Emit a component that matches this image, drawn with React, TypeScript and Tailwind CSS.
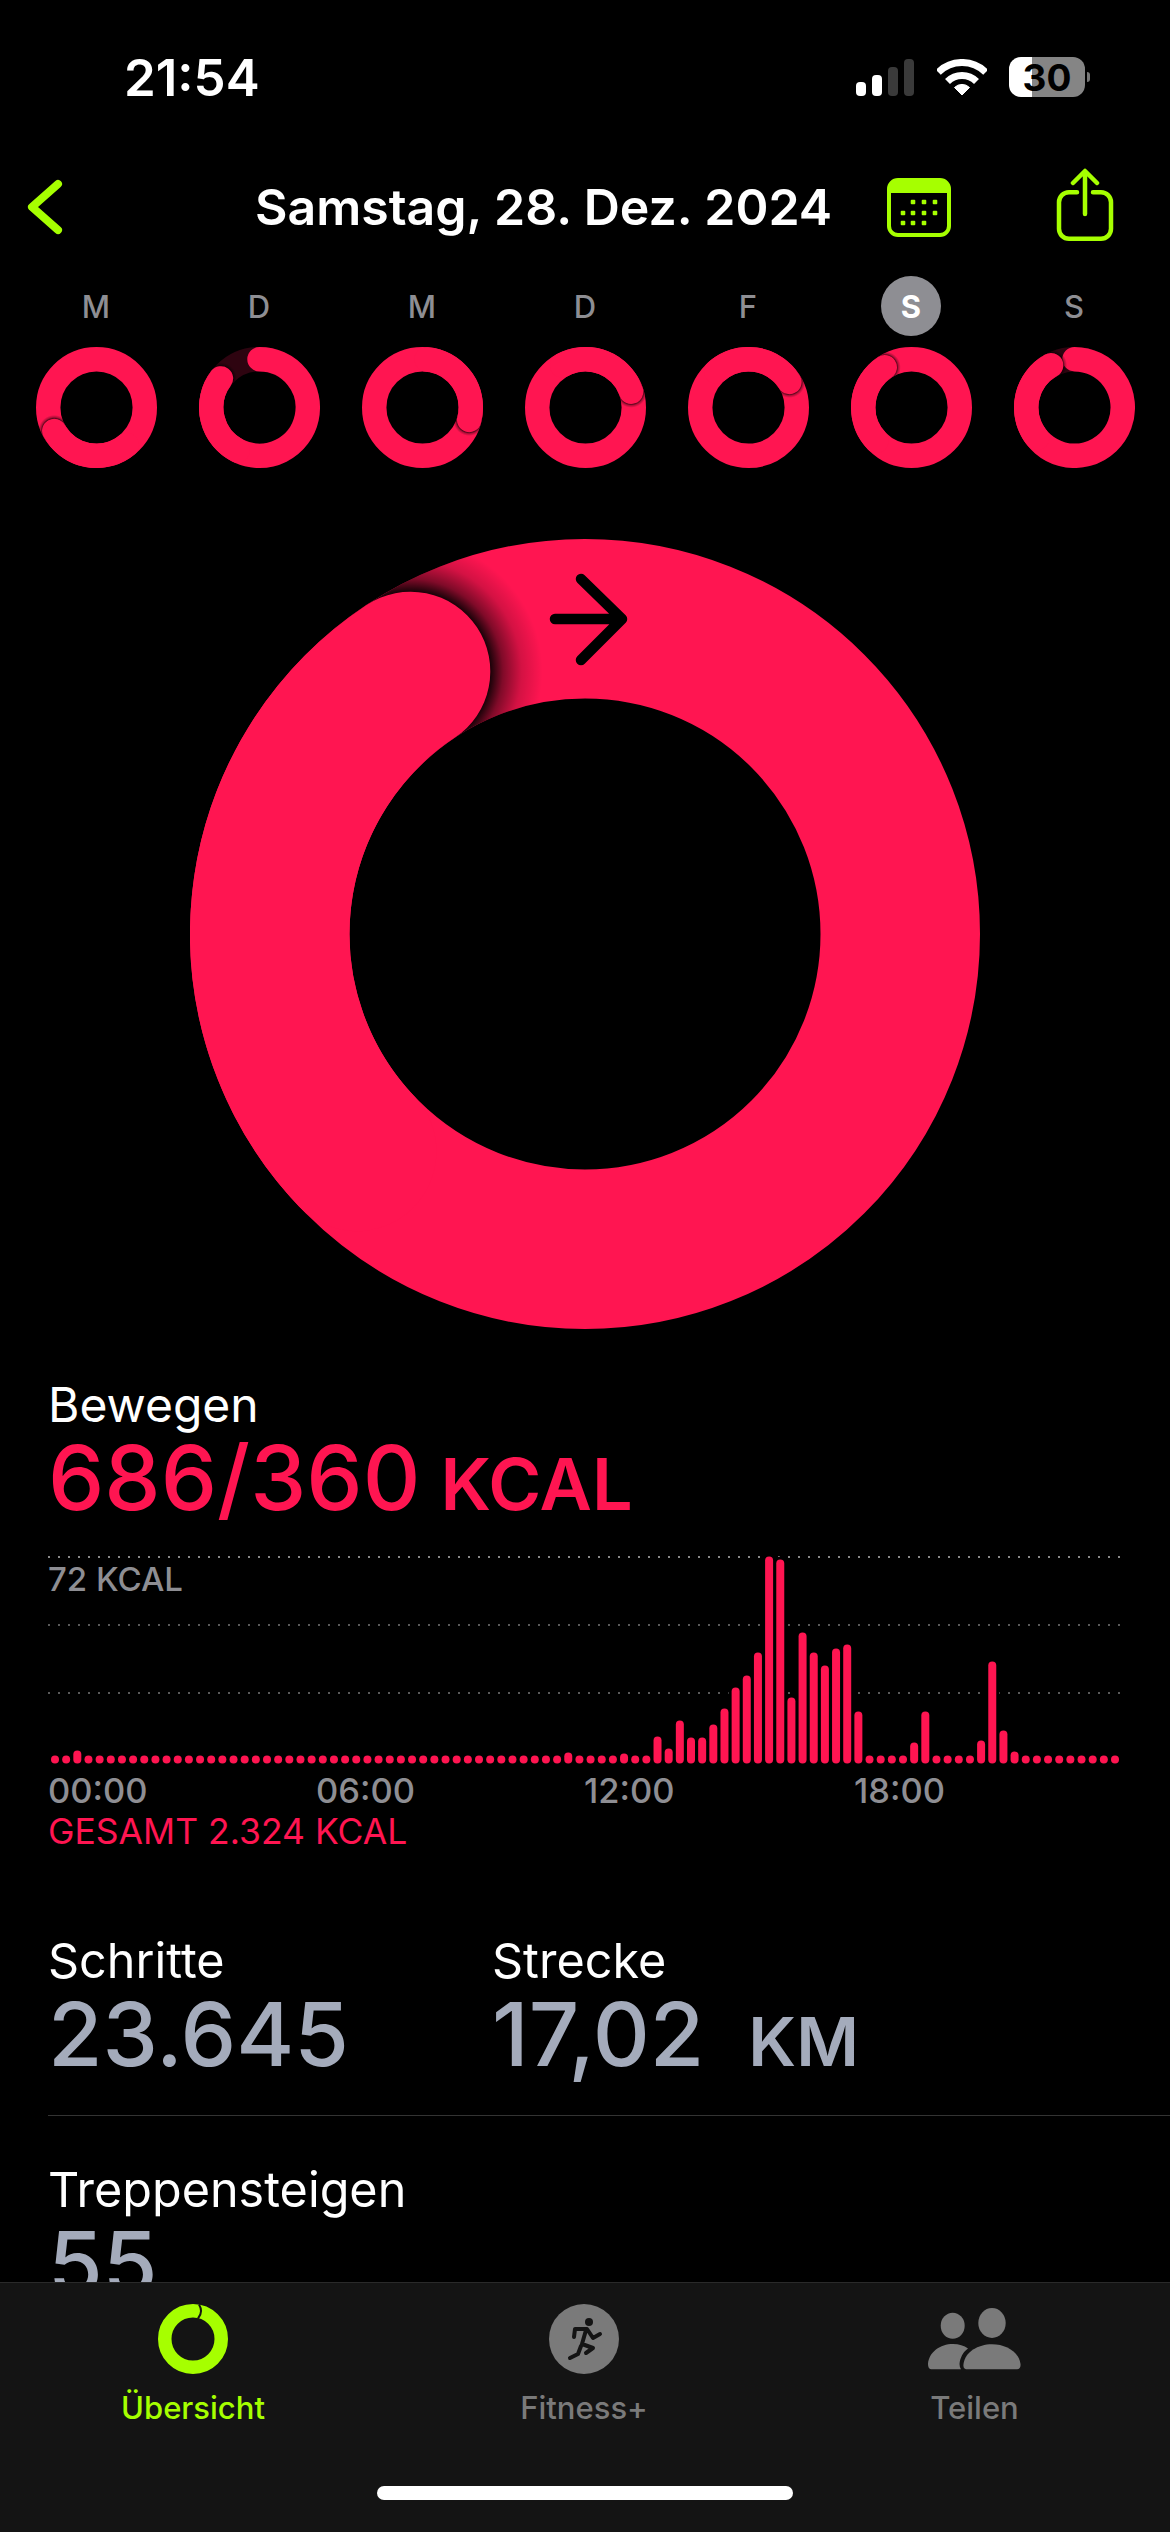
const PINK = '#ff1551';

// end angle of the move ring, in degrees clockwise from the top
const week = [
  { label: 'M', end: 241, full: true },
  { label: 'D', end: 307, full: false },
  { label: 'M', end: 105, full: true },
  { label: 'D', end: 71, full: true },
  { label: 'F', end: 58, full: true },
  { label: 'S', end: 326.4, full: true, selected: true },
  { label: 'S', end: 331, full: false },
];

// height in px per quarter hour, 8 is the flat dot
const barHeights: Record<number, number> = {
  2: 13, 46: 11, 51: 10, 54: 27, 55: 15, 56: 43, 57: 26, 58: 26, 59: 39, 60: 55, 61: 76, 62: 88, 63: 111,
  64: 207, 65: 204, 66: 66, 67: 131, 68: 111, 69: 98, 70: 115, 71: 119, 72: 52, 77: 21, 78: 52, 83: 23,
  84: 102, 85: 33, 86: 12,
};

const polar = (deg: number) => {
  const rad = (deg * Math.PI) / 180;
  return { x: 395 + 315.25 * Math.sin(rad), y: 395 - 315.25 * Math.cos(rad) };
};

const arc = (from: number, to: number) => {
  const a = polar(from);
  const b = polar(to);
  const large = to - from > 180 ? 1 : 0;
  return `M${a.x} ${a.y} A315.25 315.25 0 ${large} 1 ${b.x} ${b.y}`;
};

type RingProps = { id: string; end: number; full: boolean; arrow?: boolean; className: string };

const Ring = ({ id, end, full, arrow, className }: RingProps) => {
  const cap = polar(end);
  return (
    <svg viewBox="0 0 790 790" className={className}>
      <defs>
        {arrow ? (
          <radialGradient id={id} gradientUnits="userSpaceOnUse" cx={cap.x} cy={cap.y} r="132">
            <stop offset="0.6" stopColor="#000" stopOpacity="0.92" />
            <stop offset="0.7" stopColor="#000" stopOpacity="0.5" />
            <stop offset="0.84" stopColor="#000" stopOpacity="0.17" />
            <stop offset="1" stopColor="#000" stopOpacity="0" />
          </radialGradient>
        ) : (
          <radialGradient id={id} gradientUnits="userSpaceOnUse" cx={cap.x} cy={cap.y} r="104">
            <stop offset="0.76" stopColor="#000" stopOpacity="0.75" />
            <stop offset="0.86" stopColor="#000" stopOpacity="0.3" />
            <stop offset="1" stopColor="#000" stopOpacity="0" />
          </radialGradient>
        )}
      </defs>
      <circle cx="395" cy="395" r="315.25" fill="none" strokeWidth="159.5" stroke={full ? PINK : '#2e0410'} />
      {!full && <path d={arc(0, end)} fill="none" stroke={PINK} strokeWidth="159.5" strokeLinecap="round" />}
      <circle cx="395" cy="395" r="315.25" fill="none" strokeWidth="159.5" stroke={`url(#${id})`} />
      <path d={arc(end - 100, end)} fill="none" stroke={PINK} strokeWidth="159.5" strokeLinecap="round" />
      {arrow && (
        <path
          d="M365 80H432M391 40L432 80L391 121"
          fill="none"
          stroke="#000"
          strokeWidth="10.5"
          strokeLinecap="round"
          strokeLinejoin="round"
        />
      )}
    </svg>
  );
};

const StatusBar = () => (
  <div className="flex h-[154px] shrink-0 items-center pl-[124px] pr-[80px]">
    <span className="text-[51px] font-semibold leading-none text-white">21:54</span>
    <div className="ml-auto flex items-center">
      <svg width="58" height="37" viewBox="0 0 58 37">
        <rect x="0" y="23" width="10" height="14" rx="4" fill="#fff" />
        <rect x="16" y="16" width="10" height="21" rx="4" fill="#fff" />
        <rect x="32" y="8" width="10" height="29" rx="4" fill="#3a3a3a" />
        <rect x="48" y="0" width="10" height="37" rx="4" fill="#3a3a3a" />
      </svg>
      <svg width="50" height="37" viewBox="0 0 50 37" className="ml-[23px]">
        <path d="M1.3 13.3A33.5 33.5 0 0 1 48.7 13.3" fill="none" stroke="#fff" strokeWidth="7" />
        <path d="M10.5 22.5A20.5 20.5 0 0 1 39.5 22.5" fill="none" stroke="#fff" strokeWidth="7" />
        <path d="M25 36L17.5 28.5A10.6 10.6 0 0 1 32.5 28.5Z" fill="#fff" stroke="#fff" strokeWidth="1" strokeLinejoin="round" />
      </svg>
      <div className="ml-[22px] flex h-[40px] w-[76px] items-center justify-center rounded-[12px] bg-[linear-gradient(90deg,#ffffff_23px,#858585_23px)] text-[37px] font-bold leading-none text-black">
        30
      </div>
      <div className="ml-[2px] h-[10px] w-[3px] rounded-r-full bg-[#777777]" />
    </div>
  </div>
);

const NavBar = () => (
  <div className="mb-[16px] flex h-[106px] shrink-0 items-center">
    <div className="w-[255px] pl-[25px]">
      <svg width="40" height="64" viewBox="0 0 40 64">
        <path d="M33 9L7 32L33 55" fill="none" stroke="#a6ff00" strokeWidth="8" strokeLinecap="round" strokeLinejoin="round" />
      </svg>
    </div>
    <div className="w-[571px] whitespace-nowrap text-center text-[50px] font-semibold leading-none text-white">
      Samstag, 28. Dez. 2024
    </div>
    <svg width="64" height="59" viewBox="0 0 64 59" className="ml-[61px]">
      <rect x="2" y="2" width="60" height="55" rx="9" fill="none" stroke="#a6ff00" strokeWidth="4" />
      <path d="M2 15V11a9 9 0 0 1 9-9H53a9 9 0 0 1 9 9V15Z" fill="#a6ff00" />
      {[
        [26, 24], [37, 24], [48, 24],
        [16, 35], [26, 35], [37, 35], [48, 35],
        [16, 45], [26, 45], [37, 45],
      ].map(([x, y]) => (
        <rect key={`${x}-${y}`} x={x - 2.3} y={y - 2.3} width="4.6" height="4.6" rx="1" fill="#a6ff00" />
      ))}
    </svg>
    <svg width="60" height="75" viewBox="0 0 60 75" className="ml-[104px] mb-[3px]">
      <path
        d="M22 24.2H14a10 10 0 0 0 -10 10V60.8a10 10 0 0 0 10 10H46a10 10 0 0 0 10-10V34.2a10 10 0 0 0 -10-10H38"
        fill="none"
        stroke="#a6ff00"
        strokeWidth="4.5"
        strokeLinecap="round"
      />
      <path d="M30 46V4M18 15L30 3L42 15" fill="none" stroke="#a6ff00" strokeWidth="4.5" strokeLinecap="round" strokeLinejoin="round" />
    </svg>
  </div>
);

const WeekRow = () => (
  <div className="grid shrink-0 grid-cols-7 pl-[14.5px] pr-[14.5px]">
    {week.map((day, i) => (
      <div key={i} className="flex flex-col items-center">
        <div
          className={`flex h-[60px] w-[60px] items-center justify-center rounded-full text-[31px] leading-none ${
            day.selected ? 'bg-[#8e8e93] font-bold text-white' : 'font-medium text-[#8e8e93]'
          }`}
        >
          {day.label}
        </div>
        <Ring id={`day-${i}`} end={day.end} full={day.full} className="mt-[11px] h-[121px] w-[121px]" />
      </div>
    ))}
  </div>
);

const MoveChart = () => {
  const bars = Array.from({ length: 96 }, (_, i) => ({
    x: 51 + (1060 / 95) * i,
    h: barHeights[i] ?? 8,
  }));
  return (
    <div className="relative h-[220px] shrink-0">
      <svg width="1170" height="220" viewBox="0 0 1170 220">
        <line x1="48" x2="1120" y1="7" y2="7" stroke="#8a8a8a" strokeWidth="2" strokeDasharray="2 8" />
        <line x1="48" x2="1120" y1="75" y2="75" stroke="#5a5a5a" strokeWidth="2" strokeDasharray="2 8" />
        <line x1="48" x2="1120" y1="143" y2="143" stroke="#5a5a5a" strokeWidth="2" strokeDasharray="2 8" />
        {bars.map((b, i) => (
          <rect key={i} x={b.x} y={213.5 - b.h} width="8" height={b.h} rx="4" fill="#000" stroke="#000" strokeWidth="6" />
        ))}
        {bars.map((b, i) => (
          <rect key={i} x={b.x} y={213.5 - b.h} width="8" height={b.h} rx="4" fill={PINK} />
        ))}
      </svg>
      <span className="absolute left-[48px] top-[11px] text-[33px] font-medium leading-[36px] text-[#8e8e93]">72 KCAL</span>
    </div>
  );
};

const Stat = ({ label, value, unit }: { label: string; value: string; unit?: string }) => (
  <div className="flex flex-col">
    <span className="text-[48.5px] leading-[48px] text-white">{label}</span>
    <div className="mt-[9px] flex h-[80px] items-baseline leading-[80px] text-[#a4abbb]">
      <span className="text-[88.5px] font-medium">{value}</span>
      {unit && <span className="ml-[44px] text-[68px] font-semibold">{unit}</span>}
    </div>
  </div>
);

const TabBar = () => (
  <div className="h-[250px] shrink-0 border-t border-[#2a2a2a] bg-[#141414]">
    <div className="grid grid-cols-[386px_396px_385px] pt-[21px]">
      <div className="flex flex-col items-center">
        <svg width="70" height="70" viewBox="0 0 70 70">
          <circle cx="35" cy="35" r="28.25" fill="none" stroke="#a6ff00" strokeWidth="13.5" />
          <path d="M41 0.5Q45.5 8 40 14.5" fill="none" stroke="#141414" strokeWidth="2" />
        </svg>
        <span className="mt-[16px] text-[31px] font-medium leading-[36px] text-[#a6ff00]">Übersicht</span>
      </div>
      <div className="flex flex-col items-center">
        <svg width="70" height="70" viewBox="0 0 70 70">
          <circle cx="35" cy="35" r="35" fill="#7a7a7a" />
          <circle cx="40" cy="18" r="4" fill="#141414" />
          <path
            d="M25 33L26 25H38L44 34L51 30M37 26L33 40L44 44L37 49M32 42L29 50L21 54"
            fill="none"
            stroke="#141414"
            strokeWidth="4"
            strokeLinecap="round"
            strokeLinejoin="round"
          />
        </svg>
        <span className="mt-[16px] text-[31px] font-medium leading-[36px] text-[#7a7a7a]">Fitness+</span>
      </div>
      <div className="flex flex-col items-center">
        <svg width="97" height="70" viewBox="26 9 97 70">
          <ellipse cx="52.7" cy="30.7" rx="12" ry="13" fill="#7a7a7a" />
          <ellipse cx="92" cy="28" rx="13.7" ry="15" fill="#7a7a7a" />
          <path d="M66 74.3Q63 74 63.5 69C65 57 78 49.3 92 49.3C106 49.3 119 57 120.5 69Q121 74 117 74.3Z" fill="#7a7a7a" />
          <path d="M31 74.3Q28 74 28 69C29 57 40 49 53 49C59 49 64 50.5 68 53.5C63 57 60 63 59.5 69Q59.5 72 61 74.3Z" fill="#7a7a7a" />
        </svg>
        <span className="mt-[16px] text-[31px] font-medium leading-[36px] text-[#7a7a7a]">Teilen</span>
      </div>
    </div>
    <div className="mx-auto mt-[60px] h-[14px] w-[416px] rounded-full bg-white" />
  </div>
);

export default function App() {
  return (
    <div className="flex h-[2532px] w-[1170px] flex-col overflow-hidden bg-black font-['Inter',sans-serif]">
      <div className="flex min-h-0 flex-1 flex-col overflow-hidden">
        <StatusBar />
        <NavBar />
        <WeekRow />
        <Ring id="today" end={326.4} full arrow className="mt-[71px] h-[790px] w-[790px] shrink-0 self-center" />

        <div className="mt-[52px] shrink-0 pl-[48px]">
          <div className="text-[48px] leading-[48px] text-white">Bewegen</div>
          <div className="mt-[9px] flex h-[80px] items-baseline leading-[80px] text-[#ff1551]">
            <span className="text-[89.5px] font-medium">686/360</span>
            <span className="ml-[20px] text-[72px] font-semibold">KCAL</span>
          </div>
        </div>

        <div className="mt-[32px]">
          <MoveChart />
        </div>

        <div className="mt-[3px] grid shrink-0 grid-cols-[268px_268px_270px_1fr] pl-[48px] text-[34.5px] font-medium leading-[36px] text-[#8e8e93]">
          <span>00:00</span>
          <span>06:00</span>
          <span>12:00</span>
          <span>18:00</span>
        </div>
        <div className="mt-[5px] shrink-0 pl-[48px] text-[35.5px] leading-[36px] text-[#ff1551]">GESAMT 2.324 KCAL</div>

        <div className="mt-[87px] grid shrink-0 grid-cols-[444px_1fr] pl-[48px]">
          <Stat label="Schritte" value="23.645" />
          <Stat label="Strecke" value="17,02" unit="KM" />
        </div>

        <div className="ml-[48px] mt-[41px] h-px shrink-0 bg-[#333333]" />

        <div className="mt-[50px] shrink-0 pl-[48px]">
          <Stat label="Treppensteigen" value="55" />
        </div>
      </div>
      <TabBar />
    </div>
  );
}
